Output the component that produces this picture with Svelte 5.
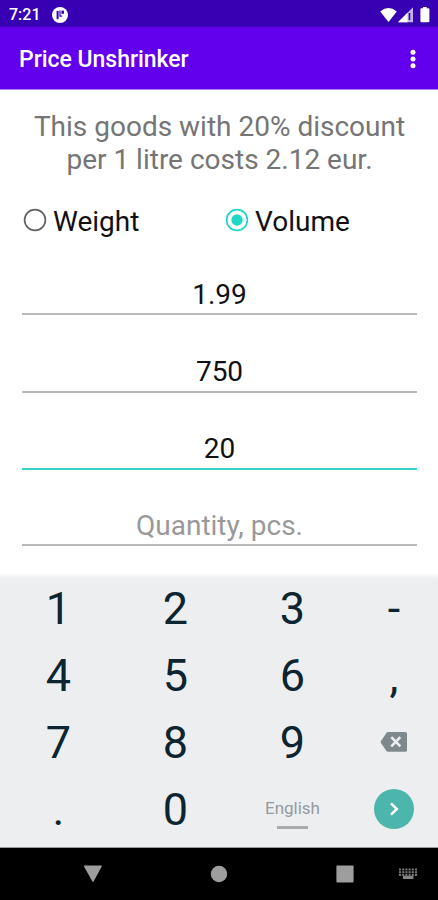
<script>
  let unit = $state('Volume');
  const units = ['Weight', 'Volume'];
  const fields = [
    { value: '1.99' },
    { value: '750' },
    { value: '20', focused: true },
    { value: 'Quantity, pcs.', hint: true }
  ];
  const keys = ['1', '2', '3', '-', '4', '5', '6', ',', '7', '8', '9', 'delete', '.', '0', 'space', 'next'];
</script>

<div class="screen">
  <div class="status">
    <span class="time">7:21</span>
    <svg class="notice" width="18" height="18" viewBox="0 0 18 18">
      <circle cx="9" cy="9" r="8" fill="#fff" />
      <path d="M5.6 5H7.6V13.2H5.6Z" fill="#3700b3" />
      <path d="M9 4.4V10.2H11.2" fill="none" stroke="#3700b3" stroke-width="1.2" />
      <path d="M10.4 4.6H13V7.8H10.4Z" fill="#3700b3" />
    </svg>
    <svg class="signals" width="54" height="20" viewBox="0 0 54 20">
      <path d="M.2 6.4Q8.5-.2 16.8 6.4L8.5 17Z" fill="#fff" />
      <path d="M18 17.2L33 2.2V17.2Z" fill="#fff" fill-opacity=".7" />
      <path d="M18 17.2L27.5 7.7V17.2Z" fill="#fff" />
      <path d="M29.5 8V15" stroke="#3700b3" stroke-width="1.6" />
      <path d="M43 2H46.8V3.2H48.4Q49.4 3.2 49.4 4.2V16.2Q49.4 17.2 48.4 17.2H41.4Q40.4 17.2 40.4 16.2V4.2Q40.4 3.2 41.4 3.2H43Z" fill="#fff" />
    </svg>
  </div>

  <header>
    <h1>Price Unshrinker</h1>
    <svg width="6" height="20" viewBox="0 0 6 20" fill="#fff">
      <circle cx="3" cy="3.2" r="2.5" /><circle cx="3" cy="10" r="2.5" /><circle cx="3" cy="16.7" r="2.5" />
    </svg>
  </header>

  <main>
    <p class="result">This goods with 20% discount<br />per 1 litre costs 2.12 eur.</p>
    <div class="units">
      {#each units as name}
        <button class="unit" class:on={unit === name} onclick={() => (unit = name)}>
          <svg width="24" height="24" viewBox="0 0 24 24">
            <circle cx="12" cy="12" r="10.4" fill="none" stroke="currentColor" stroke-width="1.7" />
            {#if unit === name}<circle cx="12" cy="12" r="5.7" fill="currentColor" />{/if}
          </svg>
          <span>{name}</span>
        </button>
      {/each}
    </div>
    <div class="fields">
      {#each fields as f}
        <div class="field" class:focused={f.focused} class:hint={f.hint}><span>{f.value}</span></div>
      {/each}
    </div>
  </main>

  <div class="keypad">
    {#each keys as key}
      <div class="key">
        {#if key === 'delete'}
          <svg class="action" width="28" height="22" viewBox="0 0 28 22">
            <path d="M8 1H25.4Q27 1 27 2.6V19.2Q27 20.8 25.4 20.8H8Q7 20.8 6.4 20L1 12Q.4 11 1 10L6.4 1.9Q7 1 8 1Z" fill="#7e898d" />
            <path d="M11.3 6.2L20.3 15.4M20.3 6.2L11.3 15.4" stroke="#eceef0" stroke-width="2.6" />
          </svg>
        {:else if key === 'space'}
          <div class="language"><span>English</span></div>
        {:else if key === 'next'}
          <svg class="action" width="40" height="40" viewBox="0 0 40 40">
            <circle cx="20" cy="20" r="20" fill="#4db6ac" />
            <path d="M17 14.3L22.8 20L17 25.7" fill="none" stroke="#fff" stroke-width="2.5" />
          </svg>
        {:else}
          <span class:comma={key === ','}>{key}</span>
        {/if}
      </div>
    {/each}
  </div>

  <nav>
    <svg width="20" height="18" viewBox="0 0 20 18"><path d="M1.4 .6H18.2Q19.3.6 18.7 1.6L10.6 16.4Q10 17.3 9.4 16.4L1 1.6Q.4.6 1.4.6Z" fill="#9e9e9e" /></svg>
    <svg width="18" height="18" viewBox="0 0 18 18"><circle cx="9" cy="9" r="8.2" fill="#9e9e9e" /></svg>
    <svg width="18" height="18" viewBox="0 0 18 18"><rect x=".4" y=".4" width="17.2" height="17.2" rx="1" fill="#9e9e9e" /></svg>
    <svg width="18" height="12" viewBox="0 0 18 12">
      <path d="M0 1.5H18M0 4.3H18M0 7H18" stroke="#777" stroke-width="2" stroke-dasharray="2.1 1.08" />
      <rect x="4" y="8" width="10.4" height="3" fill="#858585" />
    </svg>
  </nav>
</div>

<style>
  :global(body) { margin: 0; }
  .screen {
    width: 438px;
    height: 900px;
    display: flex;
    flex-direction: column;
    overflow: hidden;
    background: #fff;
    font-family: Roboto, sans-serif;
  }
  .status {
    height: 27px;
    box-sizing: border-box;
    display: flex;
    align-items: center;
    padding: 2px 4px 0 9px;
    background: #3700b3;
    color: #fff;
  }
  .time { width: 42px; font-size: 16px; font-weight: 500; line-height: 20px; }
  .signals { margin-left: auto; }
  header {
    height: 62px;
    flex: none;
    border-bottom: 1px solid #aa80f2;
    display: flex;
    align-items: center;
    justify-content: space-between;
    padding: 0 22px 0 19px;
    background: #6200ee;
    background-clip: padding-box;
    color: #fff;
  }
  header svg { margin-top: 1px; }
  h1 { margin: 4px 0 0; font-size: 23px; font-weight: 500; line-height: 28px; letter-spacing: -.03px; }
  main { flex: 1; padding: 20px 21px 0 22px; }
  .result {
    margin: 0;
    color: #757575;
    font-size: 28px;
    line-height: 33px;
    text-align: center;
    white-space: nowrap;
  }
  .units { display: grid; grid-template-columns: 202px 1fr; margin-top: 28px; padding-left: 1px; }
  .unit {
    display: flex;
    align-items: center;
    gap: 6px;
    padding: 0;
    border: 0;
    background: none;
    color: #626262;
    font: 28px/36px Roboto, sans-serif;
  }
  .unit.on { color: #1dd8c5; }
  .unit svg { margin-bottom: 4px; }
  .unit span { color: #111; }
  .fields { padding-top: 17px; }
  .field {
    height: 77px;
    box-sizing: border-box;
    display: flex;
    align-items: flex-end;
    justify-content: center;
    padding-bottom: 2px;
    border-bottom: 2px solid #b9b9b9;
    color: #111;
    font-size: 28px;
    line-height: 34px;
  }
  .field:first-child { height: 58px; padding-bottom: 1px; }
  .field:nth-child(2) { height: 78px; }
  .field.focused { border-bottom-color: #35d3c5; }
  .field.hint { height: 76px; padding-bottom: 1px; color: #999; }
  .keypad {
    height: 275px;
    padding-top: 2px;
    box-sizing: border-box;
    display: grid;
    grid-template-columns: 117px 117px 117px 86px;
    grid-template-rows: repeat(4, 67px);
    background: linear-gradient(#fdfdfd, #eceef0 6px);
    border-bottom: 1px solid #9b9d9e;
    color: #0c2530;
    font-size: 45px;
  }
  .key { display: flex; align-items: center; justify-content: center; }
  .action { margin-bottom: 2px; }
  .comma { margin-top: 2px; }
  .language {
    display: flex;
    flex-direction: column;
    align-items: center;
    margin-top: 8px;
    color: #959b9f;
    font-size: 17px;
    line-height: 20px;
  }
  .language::after { content: ''; width: 31px; height: 3px; margin-top: 8px; background: #a7abad; }
  nav {
    height: 52px;
    box-sizing: border-box;
    display: grid;
    grid-template-columns: 126px 126px 126px 0;
    padding-left: 30px;
    align-items: center;
    justify-items: center;
    background: #000;
  }
</style>
